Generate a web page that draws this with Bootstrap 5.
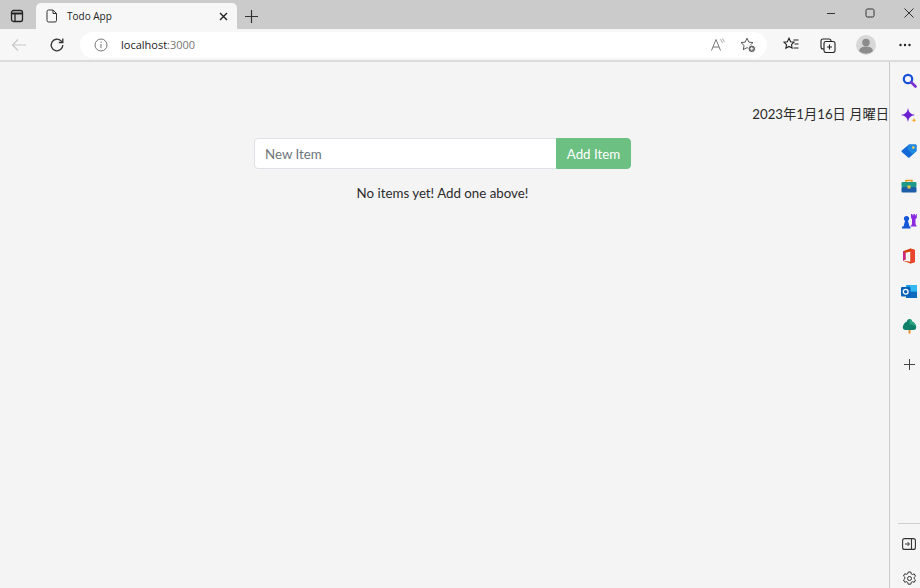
<!DOCTYPE html>
<html lang="ja">
<head>
<meta charset="utf-8">
<title>Todo App</title>
<link rel="stylesheet" href="https://cdn.jsdelivr.net/npm/bootstrap@5.3.0/dist/css/bootstrap.min.css">
<style>
html,body{height:588px;overflow:hidden;margin:0;background:#f4f4f4}
body{font-family:Lato,"Noto Sans CJK JP",sans-serif;color:#212529}
.shell{width:920px;height:588px;overflow:hidden}
.tabstrip{height:29px;background:#cbcbcb;padding:3px 0 0 0}
.win-tabs{width:33px;height:26px;margin-right:3px}
.browser-tab{width:201px;height:26px;background:#f7f7f7;border-radius:5px 5px 0 0;padding:0 9px 0 10px;font:10px "Open Sans",sans-serif;color:#222}
.tab-title{margin-left:9px;flex:1}
.new-tab{width:28px;height:26px}
.win-ctl{width:39px;height:26px;margin-top:-3px}
.win-ctls{margin-left:auto;margin-right:-8px}
.toolbar{height:33px;background:#f7f7f7;border-bottom:2px solid #dcdcdc}
.tool-btn{width:37px;height:31px;flex:none}
.back-btn{width:38px}
.addr{width:687px;flex:none;height:26px;background:#fff;border-radius:13px;margin-left:5px;padding:0 4px 0 14px;font:11px "Open Sans",sans-serif;color:#222}
.addr .port{color:#777}
.addr-text{margin-left:13px;flex:1}
.addr-ico{width:30px}
.tool-right{margin-left:5px;flex:none}
.avatar-btn{margin-left:1px}
.more-btn{margin-left:2px}
.content{height:526px}
.page{flex:1;min-width:0;padding-top:43px}
.date-line{text-align:right;font-size:13.25px;line-height:18px;height:18px;white-space:nowrap;color:#2b2b2b}
.todo-form{width:377px;margin:15px 0 0 254px}
.todo-form .form-control{height:31px;font-size:13.3px;border-color:#dee2e6;padding:0 10px;border-radius:4px 0 0 4px;font-family:Lato,sans-serif}
.todo-form .form-control::placeholder{color:#6c757d;opacity:1}
.add-btn{width:75px;height:31px;padding:2px 0 0;font-size:13.3px;color:#fff;background:#6cc082;border:1px solid #6cc082;border-radius:0 4px 4px 0}
.empty-msg{width:377px;margin:15px 0 0 254px;text-align:center;font-size:13.3px;line-height:18px;color:#2b2b2b}
.side{width:31px;flex:none;border-left:1px solid #c9c9c9;background:#f5f5f5;padding:1px 0 0 8px}
.side-ico{height:35.1px}
.side-plus{margin-top:3px}
.side-gap{flex:1}
.side-rule{height:1px;background:#cfcfcf;margin-bottom:2px}
.side-ico2{height:35px;flex:none}
.side-last{margin-bottom:-8px}
</style>
</head>
<body>
<div class="shell d-flex flex-column">
  <div class="tabstrip d-flex align-items-start">
    <div class="win-tabs d-flex align-items-center justify-content-center">
      <svg width="14" height="14" viewBox="0 0 14 14" fill="none" stroke="#222" stroke-width="1.300"><rect x="1.500" y="1.500" width="11" height="11" rx="2"/><path d="M1.500 4.500h11" stroke-width="2"/><path d="M5 4.500v8"/></svg>
    </div>
    <div class="browser-tab d-flex align-items-center">
      <svg width="12" height="14" viewBox="0 0 12 14" fill="none" stroke="#333" stroke-width="1"><path d="M2.500 1h4.500l3.500 3.500V11.500a1.500 1.500 0 0 1-1.500 1.500h-6.500a1.500 1.500 0 0 1-1.500-1.500V2.500A1.500 1.500 0 0 1 2.500 1z"/><path d="M7 1v3.500h3.500"/></svg>
      <span class="tab-title">Todo App</span>
      <svg width="9" height="9" viewBox="0 0 9 9" stroke="#222" stroke-width="1.400"><path d="M1 1l7 7M8 1l-7 7"/></svg>
    </div>
    <div class="new-tab d-flex align-items-center justify-content-center">
      <svg width="13" height="13" viewBox="0 0 13 13" stroke="#333" stroke-width="1.200"><path d="M6.500 0v13M0 6.500h13"/></svg>
    </div>
    <div class="win-ctls d-flex">
      <div class="win-ctl d-flex align-items-center justify-content-center"><svg width="10" height="10" viewBox="0 0 10 10" stroke="#333" stroke-width="1"><path d="M1 5.500h8"/></svg></div>
      <div class="win-ctl d-flex align-items-center justify-content-center"><svg width="10" height="10" viewBox="0 0 10 10" fill="none" stroke="#333" stroke-width="1"><rect x="1" y="1" width="8" height="8" rx="1.500"/></svg></div>
      <div class="win-ctl d-flex align-items-center justify-content-center"><svg width="10" height="10" viewBox="0 0 10 10" stroke="#333" stroke-width="1"><path d="M.5.500l9 9M9.500.500l-9 9"/></svg></div>
    </div>
  </div>
  <div class="toolbar d-flex align-items-center">
    <div class="tool-btn back-btn d-flex align-items-center justify-content-center"><svg width="16" height="14" viewBox="0 0 16 14" fill="none" stroke="#c8c8c8" stroke-width="1.200"><path d="M15 7H1.500M7 1.500L1.500 7 7 12.500"/></svg></div>
    <div class="tool-btn d-flex align-items-center justify-content-center"><svg width="16" height="16" viewBox="0 0 16 16" fill="none" stroke="#333" stroke-width="1.300"><path d="M13.800 8a5.800 5.800 0 1 1-1.700-4.100L13.800 5.500"/><path d="M13.800 1.500v4h-4"/></svg></div>
    <div class="addr d-flex align-items-center">
      <svg width="14" height="14" viewBox="0 0 14 14" fill="none" stroke="#777" stroke-width="1"><circle cx="7" cy="7" r="6"/><path d="M7 6v4.200M7 3.600v1.200"/></svg>
      <span class="addr-text">localhost<span class="port">:3000</span></span>
      <div class="addr-ico d-flex justify-content-center"><svg width="14" height="13" viewBox="0 0 14 13" fill="none" stroke="#777" stroke-width="1"><path d="M.5 12.500L5 1.500l4.500 11M2 9h6"/><path d="M9.500 1l2 4M11.500.500l2 3.500" stroke="#aaa"/></svg></div>
      <div class="addr-ico d-flex justify-content-center"><svg width="16" height="16" viewBox="0 0 16 16" fill="none" stroke="#555" stroke-width="1"><path d="M7 1.200l1.800 3.900 4.200.500-3.100 2.900.8 4.200L7 10.600l-3.700 2.100.8-4.200L1 5.600l4.200-.500z"/><circle cx="11.800" cy="11.800" r="3.800" fill="#666" stroke="#fff" stroke-width="1"/><path d="M11.800 10v3.600M10 11.800h3.600" stroke="#fff"/></svg></div>
    </div>
    <div class="tool-right d-flex align-items-center">
      <div class="tool-btn d-flex align-items-center justify-content-center"><svg width="16" height="15" viewBox="0 0 16 15" fill="none" stroke="#222" stroke-width="1.100"><path d="M6 1.200l1.600 3.500 3.400.500-2.500 2.400.600 3.400L6 9.400l-3.100 1.700.600-3.400L1 5.200l3.400-.500zM10.500 3h5M11.500 7h4M10.500 11h5"/></svg></div>
      <div class="tool-btn d-flex align-items-center justify-content-center"><svg width="16" height="16" viewBox="0 0 16 16" fill="none" stroke="#222" stroke-width="1.100"><rect x="1" y="2" width="10" height="10" rx="2"/><rect x="4" y="4.500" width="11" height="11" rx="2" fill="#f7f7f7"/><path d="M9.500 7.500v5M7 10h5"/></svg></div>
      <div class="tool-btn avatar-btn d-flex align-items-center justify-content-center"><svg width="20" height="20" viewBox="0 0 20 20"><circle cx="10" cy="10" r="10" fill="#d8d8d8"/><circle cx="10" cy="7.500" r="3.800" fill="#8c8c8c"/><path d="M3 16c.8-3.500 3.500-4.500 7-4.500s6.200 1 7 4.500a10 10 0 0 1-14 0z" fill="#8c8c8c"/></svg></div>
      <div class="tool-btn more-btn d-flex align-items-center justify-content-center"><svg width="12" height="4" viewBox="0 0 12 4" fill="#222"><circle cx="1.500" cy="2" r="1.200"/><circle cx="6" cy="2" r="1.200"/><circle cx="10.500" cy="2" r="1.200"/></svg></div>
    </div>
  </div>
  <div class="content d-flex">
    <div class="page">
      <div class="date-line">2023年1月16日 月曜日</div>
      <form class="todo-form input-group">
        <input class="form-control" type="text" placeholder="New Item">
        <button class="btn add-btn" type="button">Add Item</button>
      </form>
      <p class="empty-msg">No items yet! Add one above!</p>
    </div>
    <div class="side d-flex flex-column">
      <div class="side-ico d-flex align-items-center justify-content-center"><svg width="15" height="15" viewBox="0 0 15 15" fill="none"><circle cx="6" cy="6" r="4.200" stroke="#1450d8" stroke-width="2.200"/><path d="M9.500 9.500l4 4" stroke="#7a2ed0" stroke-width="2.600" stroke-linecap="round"/></svg></div>
      <div class="side-ico d-flex align-items-center justify-content-center"><svg width="16" height="16" viewBox="0 0 16 16"><path d="M7 0c.9 4.600 2.400 6 7 7-4.600 1-6.100 2.400-7 7-.9-4.600-2.400-6-7-7 4.600-1 6.100-2.400 7-7z" fill="#6a22d0"/><path d="M13 9.500c.3 2 .8 2.500 2.800 2.800-2 .3-2.500.8-2.800 2.800-.3-2-.8-2.500-2.800-2.800 2-.3 2.500-.8 2.800-2.800z" fill="#f5a623"/></svg></div>
      <div class="side-ico d-flex align-items-center justify-content-center"><svg width="16" height="15" viewBox="0 0 16 15"><path d="M8 1.500h6.500a1 1 0 0 1 1 1V8l-7 6.500a1 1 0 0 1-1.400 0L.8 9a1 1 0 0 1 0-1.400z" fill="#1468d8"/><path d="M8 1.500h6.500a1 1 0 0 1 1 1V8l-4 3.700-5-6z" fill="#1f8ae0"/><circle cx="12.300" cy="4.500" r="1.300" fill="#f7d046"/></svg></div>
      <div class="side-ico d-flex align-items-center justify-content-center"><svg width="16" height="14" viewBox="0 0 16 14"><path d="M5 3V1.500h6V3" fill="none" stroke="#e89a20" stroke-width="1.500"/><rect x="0.500" y="3" width="15" height="5" rx="1" fill="#1d9a8a"/><rect x="0.500" y="8" width="15" height="5.500" rx="1" fill="#1c5fa8"/><rect x="6.500" y="6.500" width="3" height="3" fill="#f5c542"/></svg></div>
      <div class="side-ico d-flex align-items-center justify-content-center"><svg width="16" height="16" viewBox="0 0 16 16"><circle cx="5.500" cy="5.500" r="2.600" fill="#1458d8"/><path d="M4 8h3l1.500 5.500h1v2H1v-2h1.500z" fill="#1458d8"/><path d="M10 1h1.500v1.200h1V1H14v1.200h1V1h.8v4l-1.300 1v5l1.300 2.500H9.500L11 11V6L10 5z" fill="#8a2be2"/></svg></div>
      <div class="side-ico d-flex align-items-center justify-content-center"><svg width="14" height="16" viewBox="0 0 14 16"><path d="M1 3.200L8.500.500l4.500 1.500v12l-4.500 1.500L1 12.800l7.500 1V3.500L3.500 4.800v6.800L1 12.800z" fill="#d83b01"/><path d="M8.500.500l4.500 1.500v12l-4.500 1.500z" fill="#e8452c"/><path d="M1 12.800V3.200l2.500 1.600v6.800z" fill="#c8268a"/></svg></div>
      <div class="side-ico d-flex align-items-center justify-content-center"><svg width="16" height="15" viewBox="0 0 16 15"><rect x="5" y="1" width="11" height="13" rx="1" fill="#1b9de2"/><rect x="9" y="1" width="7" height="6" fill="#35b8f1"/><rect x="5" y="8" width="11" height="6" fill="#0f6cbd"/><rect x="0" y="3" width="9.500" height="9.500" rx="1" fill="#0a62b8"/><circle cx="4.700" cy="7.700" r="2.400" fill="none" stroke="#fff" stroke-width="1.300"/></svg></div>
      <div class="side-ico d-flex align-items-center justify-content-center"><svg width="15" height="16" viewBox="0 0 15 16"><path d="M7.500 1c1.500 0 2.500 1.300 2.800 2.700 1.800.6 2.900 2 3.700 4.300.8 2.500-.6 4-2.500 4H3.500C1.600 12 .2 10.500 1 8c.8-2.300 1.900-3.700 3.700-4.300C5 2.300 6 1 7.500 1z" fill="#11806a"/><path d="M7.500 1c1.500 0 2.500 1.300 2.800 2.700 1.800.6 2.900 2 3.700 4.300L7.500 6z" fill="#2aa67f"/><rect x="6.500" y="12" width="2" height="3.500" fill="#e8922a"/></svg></div>
      <div class="side-ico side-plus d-flex align-items-center justify-content-center"><svg width="11" height="11" viewBox="0 0 11 11" stroke="#444" stroke-width="1"><path d="M5.500 0v11M0 5.500h11"/></svg></div>
      <div class="side-gap"></div>
      <div class="side-rule"></div>
      <div class="side-ico2 d-flex align-items-center justify-content-center"><svg width="14" height="12" viewBox="0 0 14 12" fill="none" stroke="#333" stroke-width="1.100"><rect x=".6" y=".6" width="12.800" height="10.800" rx="2"/><path d="M9.500.6v10.800"/><path d="M3 6h4.200M5.500 4l2 2-2 2" stroke-width="1"/></svg></div>
      <div class="side-ico2 side-last d-flex align-items-center justify-content-center"><svg width="15" height="15" viewBox="0 0 15 15" fill="none" stroke="#333" stroke-width="1"><path d="M6.200 1h2.600l.400 1.800 1.300.700 1.700-.6 1.300 2.300-1.300 1.200v1.400l1.300 1.200-1.300 2.300-1.700-.6-1.300.700-.4 1.800H6.200l-.4-1.800-1.300-.7-1.700.6-1.300-2.300 1.300-1.200V6.200L1.500 5l1.300-2.300 1.700.6 1.300-.7z"/><circle cx="7.500" cy="7.500" r="2"/></svg></div>
    </div>
  </div>
</div>
</body>
</html>
